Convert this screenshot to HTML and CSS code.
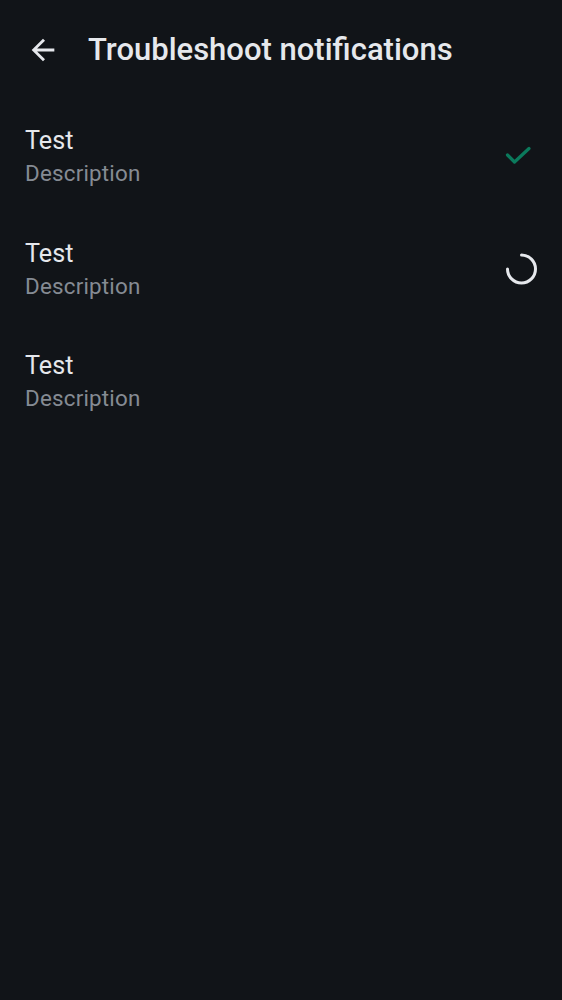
FILE: index.html
```html
<!DOCTYPE html>
<html>
<head>
<meta charset="utf-8">
<link rel="stylesheet" href="styles.css">
</head>
<body>
<div class="screen">
  <header class="topbar">
    <svg class="back" viewBox="0 0 24 24" width="34" height="34"><path d="M20 11H7.83l5.59-5.59L12 4l-8 8 8 8 1.41-1.41L7.83 13H20v-2z" fill="#e6e8ec"/></svg>
    <h1 class="title">Troubleshoot notifications</h1>
  </header>
  <ul class="list">
    <li class="row">
      <div class="texts"><div class="label">Test</div><div class="desc">Description</div></div>
      <div class="trail"><svg viewBox="0 0 32 32" width="32" height="32"><polyline points="2.5,15 9.5,22 24,8.5" fill="none" stroke="#0b7a5c" stroke-width="3.2" stroke-linecap="round" stroke-linejoin="round"/></svg></div>
    </li>
    <li class="row">
      <div class="texts"><div class="label">Test</div><div class="desc">Description</div></div>
      <div class="trail"><svg viewBox="0 0 32 32" width="32" height="32"><path d="M16.5 2 A14 14 0 1 1 2.5 16" fill="none" stroke="#e6e8ec" stroke-width="3" stroke-linecap="round"/></svg></div>
    </li>
    <li class="row">
      <div class="texts"><div class="label">Test</div><div class="desc">Description</div></div>
      <div class="trail"></div>
    </li>
  </ul>
</div>
</body>
</html>
```
FILE: styles.css
```css
html, body {
  margin: 0;
  padding: 0;
  background: #111418;
}
.screen {
  width: 562px;
  min-height: 1000px;
  background: #111418;
  font-family: Roboto, "Noto Sans", sans-serif;
  color: #e6e8ec;
}
.topbar {
  height: 100px;
  display: flex;
  align-items: center;
  padding-left: 26px;
  gap: 28px;
}
.back {
  display: block;
  flex: none;
}
.title {
  margin: 0;
  font-size: 31px;
  font-weight: 500;
  line-height: 36px;
  color: #e6e8ec;
}
.list {
  list-style: none;
  margin: 0;
  padding: 0;
}
.row {
  height: 112.5px;
  display: flex;
  align-items: center;
  justify-content: space-between;
  padding: 0 25px;
}
.texts {
  display: flex;
  flex-direction: column;
  padding-top: 1px;
}
.label {
  font-size: 25.2px;
  line-height: 32px;
  color: #e6e8ec;
}
.desc {
  font-size: 22.4px;
  line-height: 30px;
  margin-top: 1px;
  color: #858b93;
  letter-spacing: 0.2px;
}
.trail {
  width: 32px;
  height: 32px;
  flex: none;
}
.trail svg {
  display: block;
}
```
